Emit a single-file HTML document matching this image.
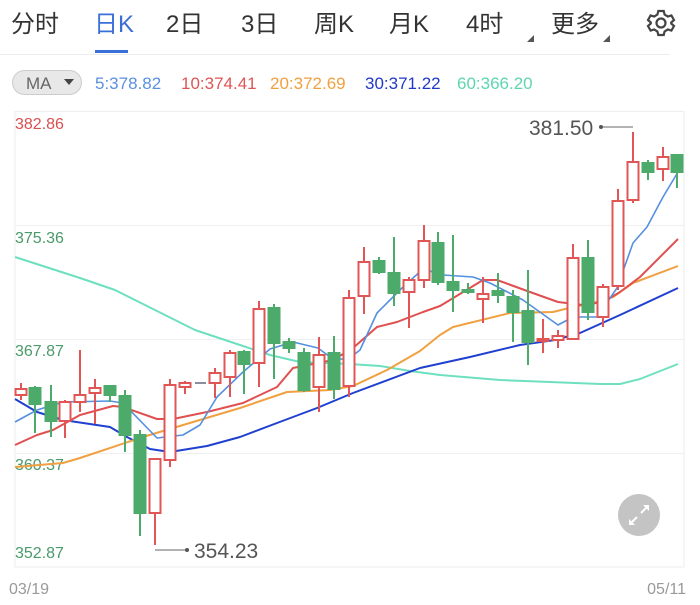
<!DOCTYPE html>
<html><head><meta charset="utf-8"><style>
body{margin:0;width:700px;height:600px;background:#fff;overflow:hidden;font-family:"Liberation Sans","Noto Sans CJK SC",sans-serif}
</style></head><body>
<svg width="700" height="600" xmlns="http://www.w3.org/2000/svg" font-family="Liberation Sans, Noto Sans CJK SC, sans-serif">
<g font-size="24" fill="#333">
<text x="11" y="32">分时</text>
<text x="94" y="32" fill="#3b6fd8">日K</text>
<text x="166" y="32">2日</text>
<text x="241" y="32">3日</text>
<text x="314" y="32">周K</text>
<text x="389" y="32">月K</text>
<text x="466" y="32">4时</text>
<text x="551" y="32">更多</text>
</g>
<polygon points="534,35 534,42 527,42" fill="#555"/>
<polygon points="610,35 610,42 603,42" fill="#555"/>
<rect x="95" y="50" width="33" height="3" fill="#3b6fd8"/>
<line x1="0" y1="54.5" x2="670" y2="54.5" stroke="#ececec"/>
<g transform="translate(661,23)" fill="none" stroke="#444" stroke-width="2.2">
<path d="M-2.7,-12 L2.7,-12 L3.6,-8.4 L6.8,-6.5 L10.4,-7.6 L13,-3 L10.2,-0.5 L10.2,0.5 L13,3 L10.4,7.6 L6.8,6.5 L3.6,8.4 L2.7,12 L-2.7,12 L-3.6,8.4 L-6.8,6.5 L-10.4,7.6 L-13,3 L-10.2,0.5 L-10.2,-0.5 L-13,-3 L-10.4,-7.6 L-6.8,-6.5 L-3.6,-8.4 Z"/>
<circle r="4.5"/>
</g>
<rect x="12.5" y="70.5" width="69" height="24" rx="12" fill="#e8e8e8" stroke="#ccc"/>
<text x="26" y="89" font-size="17" fill="#666">MA</text>
<polygon points="64,79 74,79 69,85" fill="#444"/>
<g font-size="17">
<text x="95" y="89" fill="#5b8fe0">5:378.82</text>
<text x="181" y="89" fill="#e05555">10:374.41</text>
<text x="270" y="89" fill="#f0a040">20:372.69</text>
<text x="365" y="89" fill="#2038c8">30:371.22</text>
<text x="457" y="89" fill="#5dd6b0">60:366.20</text>
</g>
<rect x="15" y="111.5" width="669" height="455.5" fill="none" stroke="#eee"/>
<g stroke="#f0f0f0"><line x1="15" y1="225.5" x2="684" y2="225.5"/><line x1="15" y1="339.5" x2="684" y2="339.5"/><line x1="15" y1="453.5" x2="684" y2="453.5"/></g>
<g font-size="16" fill="#4a9a6a">
<text x="15" y="129" fill="#d85050">382.86</text>
<text x="15" y="243">375.36</text>
<text x="15" y="356">367.87</text>
<text x="15" y="470">360.37</text>
<text x="15" y="558">352.87</text>
</g>
<g fill="none" stroke-width="2" stroke-linejoin="round">
<polyline stroke="#6ee0c0" points="15,257 80,278 115,290 155,310 195,330 240,345 270,355 300,362 350,364 380,366 410,371 440,375 500,380 550,382 600,384 620,384 640,379 678,364"/>
<polyline stroke="#2040d0" points="15,399 37,412 63,420 110,427 127,437 150,449 170,452 207,446 240,437 277,423 317,408 353,393 420,368 470,357 520,345 555,340 580,333 620,315 678,288"/>
<polyline stroke="#f0a040" points="15,467 63,463 80,458 143,437 173,428 240,408 287,392 330,390 353,386 387,370 420,351 440,335 453,327 510,313 553,312 573,307 593,303 613,297 633,283 678,266"/>
<polyline stroke="#e05050" points="15,445 37,435 53,430 80,415 113,406 123,407 157,419 173,419 207,412 243,403 277,387 293,368 333,360 353,348 377,327 397,322 423,312 440,306 483,280 497,280 530,292 558,302 583,305 603,302 620,292 640,277 678,239"/>
<polyline stroke="#5590e0" stroke-width="1.6" points="15,422 37,410 63,402 110,401 123,403 157,438 183,435 200,425 217,397 243,372 270,349 293,342 318,348 330,357 347,360 360,350 377,313 403,287 423,269 443,275 473,277 490,283 523,300 558,325 573,317 597,317 617,288 633,243 647,227 663,197 678,172"/>
</g>
<g stroke-width="2">
<g stroke="#e05555" fill="#fff">
<line x1="21" y1="383" x2="21" y2="400"/><rect x="15.5" y="389" width="11" height="6"/>
<line x1="65" y1="400" x2="65" y2="438"/><rect x="59.5" y="402" width="11" height="19"/>
<line x1="80" y1="350" x2="80" y2="412"/><rect x="74.5" y="395" width="11" height="7"/>
<line x1="95" y1="379" x2="95" y2="424"/><rect x="89.5" y="388" width="11" height="5"/>
<line x1="155" y1="459" x2="155" y2="545"/><rect x="149.5" y="459" width="11" height="54"/>
<line x1="170" y1="379" x2="170" y2="467"/><rect x="164.5" y="385" width="11" height="75"/>
<line x1="185" y1="381" x2="185" y2="394"/><rect x="179.5" y="383" width="11" height="4"/>
<line x1="215" y1="368" x2="215" y2="398"/><rect x="209.5" y="373" width="11" height="10"/>
<line x1="230" y1="350" x2="230" y2="397"/><rect x="224.5" y="353" width="11" height="24"/>
<line x1="259" y1="301" x2="259" y2="387"/><rect x="253.5" y="309" width="11" height="54"/>
<line x1="319" y1="337" x2="319" y2="412"/><rect x="313.5" y="355" width="11" height="32"/>
<line x1="349" y1="290" x2="349" y2="397"/><rect x="343.5" y="298" width="11" height="88"/>
<line x1="364" y1="247" x2="364" y2="314"/><rect x="358.5" y="262" width="11" height="34"/>
<line x1="409" y1="277" x2="409" y2="328"/><rect x="403.5" y="280" width="11" height="12"/>
<line x1="424" y1="225" x2="424" y2="288"/><rect x="418.5" y="241" width="11" height="39"/>
<line x1="483" y1="277" x2="483" y2="323"/><rect x="477.5" y="294" width="11" height="5"/>
<line x1="543" y1="319" x2="543" y2="353"/><rect x="537.5" y="339" width="11" height="2"/>
<line x1="558" y1="330" x2="558" y2="348"/><rect x="552.5" y="336" width="11" height="4"/>
<line x1="573" y1="244" x2="573" y2="340"/><rect x="567.5" y="258" width="11" height="81"/>
<line x1="603" y1="284" x2="603" y2="327"/><rect x="597.5" y="287" width="11" height="30"/>
<line x1="618" y1="189" x2="618" y2="290"/><rect x="612.5" y="201" width="11" height="85"/>
<line x1="633" y1="132" x2="633" y2="203"/><rect x="627.5" y="162" width="11" height="38"/>
<line x1="663" y1="147" x2="663" y2="181"/><rect x="657.5" y="157" width="11" height="12"/>
</g>
<g stroke="#4caa6a" fill="#4caa6a">
<line x1="35" y1="386" x2="35" y2="433"/><rect x="29.5" y="388" width="11" height="16"/>
<line x1="51" y1="385" x2="51" y2="437"/><rect x="45.5" y="402" width="11" height="19"/>
<line x1="110" y1="386" x2="110" y2="402"/><rect x="104.5" y="386" width="11" height="9"/>
<line x1="125" y1="390" x2="125" y2="452"/><rect x="119.5" y="396" width="11" height="39"/>
<line x1="140" y1="430" x2="140" y2="536"/><rect x="134.5" y="435" width="11" height="78"/>
<line x1="244" y1="350" x2="244" y2="394"/><rect x="238.5" y="352" width="11" height="12"/>
<line x1="274" y1="304" x2="274" y2="379"/><rect x="268.5" y="308" width="11" height="35"/>
<line x1="289" y1="338" x2="289" y2="353"/><rect x="283.5" y="342" width="11" height="6"/>
<line x1="304" y1="348" x2="304" y2="392"/><rect x="298.5" y="353" width="11" height="37"/>
<line x1="334" y1="336" x2="334" y2="399"/><rect x="328.5" y="353" width="11" height="36"/>
<line x1="379" y1="257" x2="379" y2="274"/><rect x="373.5" y="261" width="11" height="11"/>
<line x1="394" y1="237" x2="394" y2="306"/><rect x="388.5" y="273" width="11" height="20"/>
<line x1="438" y1="232" x2="438" y2="285"/><rect x="432.5" y="243" width="11" height="39"/>
<line x1="453" y1="235" x2="453" y2="312"/><rect x="447.5" y="282" width="11" height="8"/>
<line x1="468" y1="283" x2="468" y2="294"/><rect x="462.5" y="290" width="11" height="2"/>
<line x1="498" y1="273" x2="498" y2="303"/><rect x="492.5" y="291" width="11" height="4"/>
<line x1="513" y1="290" x2="513" y2="342"/><rect x="507.5" y="297" width="11" height="15"/>
<line x1="528" y1="270" x2="528" y2="365"/><rect x="522.5" y="311" width="11" height="31"/>
<line x1="588" y1="240" x2="588" y2="320"/><rect x="582.5" y="258" width="11" height="54"/>
<line x1="648" y1="160" x2="648" y2="180"/><rect x="642.5" y="163" width="11" height="9"/>
<line x1="677" y1="155" x2="677" y2="188"/><rect x="671.5" y="155" width="11" height="17"/>
</g>
<line x1="195" y1="383" x2="206" y2="383" stroke="#8890a0"/>
</g>
<line x1="155" y1="550" x2="187" y2="550" stroke="#666" stroke-width="1"/>
<circle cx="187" cy="550" r="2" fill="#555"/>
<text x="194" y="558" font-size="21" fill="#555">354.23</text>
<line x1="601" y1="127" x2="633" y2="127" stroke="#666" stroke-width="1"/>
<circle cx="601" cy="127" r="2" fill="#555"/>
<text x="529" y="135" font-size="21" fill="#555">381.50</text>
<circle cx="639" cy="515" r="21" fill="#c4c4c4"/>
<g stroke="#fff" stroke-width="2" fill="#fff">
<line x1="632" y1="522" x2="637" y2="517"/><polygon points="629,525 629,519 635,525" stroke-width="0"/>
<line x1="646" y1="508" x2="641" y2="513"/><polygon points="649,505 649,511 643,505" stroke-width="0"/>
</g>
<text x="9" y="594" font-size="16" fill="#999">03/19</text>
<text x="686" y="594" font-size="16" fill="#999" text-anchor="end">05/11</text>
</svg>
</body></html>
